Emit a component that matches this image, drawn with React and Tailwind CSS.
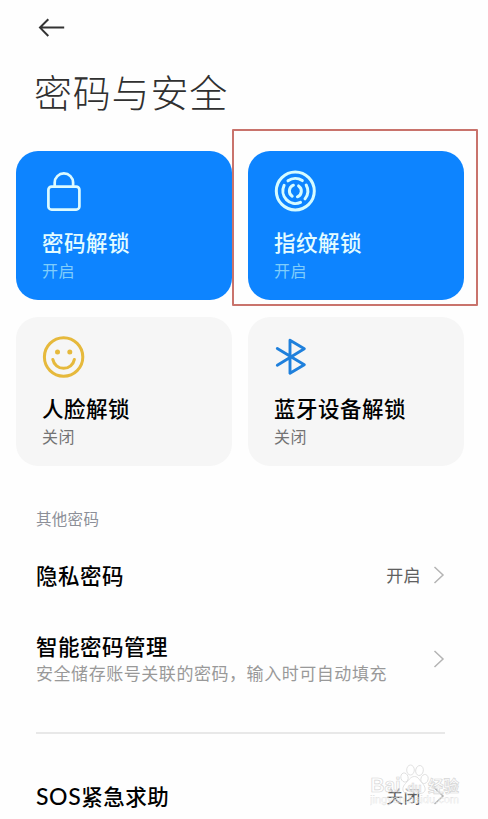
import React from 'react';
import clsx from 'clsx';

const LockIcon = () => (
  <svg className="w-11 h-11" viewBox="0 0 44 44" fill="none" stroke="#dcfaff" strokeWidth="2.7">
    <rect x="6.4" y="17.6" width="31" height="23" rx="3.2" />
    <path d="M12.7 17.3V13.6a9.200 9.200 0 0 1 18.4 0V17.3" />
  </svg>
);

const FingerprintIcon = () => (
  <svg className="w-11 h-11" viewBox="0 0 44 44" fill="none" stroke="#d5fbff" strokeWidth="3" strokeLinecap="round">
    <circle cx="21.3" cy="22" r="19" />
    {/* middle ring, broken in three places */}
    <path d="M14 11.8A12.6 12.6 0 0 1 28.3 11.6" />
    <path d="M32.2 16A12.6 12.6 0 0 1 31 29.9" />
    <path d="M10.1 16.4A12.6 12.6 0 0 0 26.5 33.4" />
    {/* core */}
    <path d="M19.4 16.2A6.2 6.2 0 0 0 18.2 27.2" />
    <path d="M24.6 16.9A6.2 6.2 0 0 1 23.4 27.8" />
  </svg>
);

const FaceIcon = () => (
  <svg className="w-11 h-11" viewBox="0 0 44 44" fill="none" stroke="#e6b93c" strokeWidth="3" strokeLinecap="round">
    <circle cx="21.6" cy="22" r="19.2" />
    <path d="M10.8 24.4a11 11 0 0 0 21.6 0" />
    <circle cx="15.5" cy="17" r="2.5" fill="#e6b93c" stroke="none" />
    <circle cx="27.8" cy="17" r="2.5" fill="#e6b93c" stroke="none" />
  </svg>
);

const BluetoothIcon = () => (
  <svg className="w-11 h-11" viewBox="0 0 44 44" fill="none" stroke="#1f80dc" strokeWidth="2.9" strokeLinecap="round" strokeLinejoin="round">
    <path d="M3.3 13.6L30.3 29.8L16 38.2V5.2L30.3 13.8L3.3 30.2" />
  </svg>
);

const Chevron = () => (
  <svg className="w-3 h-5" viewBox="0 0 12 20" fill="none" stroke="#b4b4b4" strokeWidth="1.5">
    <path d="M1.5 2L10 10L1.5 18" />
  </svg>
);

const cards = [
  { title: '密码解锁', status: '开启', icon: LockIcon, active: true },
  { title: '指纹解锁', status: '开启', icon: FingerprintIcon, active: true, marked: true },
  { title: '人脸解锁', status: '关闭', icon: FaceIcon },
  { title: '蓝牙设备解锁', status: '关闭', icon: BluetoothIcon },
];

const UnlockCard = ({ title, status, icon: Icon, active, marked }) => (
  <div
    className={clsx(
      'relative h-[149px] rounded-[22px] pt-[18px] pl-[26px]',
      active ? 'bg-[#0d84ff]' : 'bg-[#f6f6f6]'
    )}
  >
    <Icon />
    <div
      className={clsx(
        'mt-[15px] text-[21.5px] leading-7 tracking-[0.5px] font-medium',
        active ? 'text-[#e4fcff]' : 'text-black'
      )}
    >
      {title}
    </div>
    <div
      className={clsx(
        'mt-[2px] text-[16px] leading-6 tracking-[0.5px]',
        active ? 'text-[#7fcdfb]' : 'text-[#737373]'
      )}
    >
      {status}
    </div>
    {/* highlight frame */}
    {marked && (
      <div className="absolute -left-4 -top-[22px] w-[246px] h-[177px] border-2 border-solid border-[#c9736c] rounded-[1px]" />
    )}
  </div>
);

const Watermark = () => (
  <div className="absolute left-[370px] top-[763px] w-[92px] h-[46px] select-none pointer-events-none">
    <svg className="w-full h-full" viewBox="0 0 92 46">
      <g fill="#fff" fillOpacity="0.6" stroke="#dadada" strokeWidth="0.8">
        <ellipse cx="34.5" cy="14.5" rx="3.6" ry="4.6" transform="rotate(-15 34.5 14.5)" />
        <ellipse cx="40.5" cy="7" rx="3.8" ry="5" />
        <ellipse cx="49.5" cy="7.5" rx="3.8" ry="5" transform="rotate(10 49.5 7.5)" />
        <ellipse cx="54.5" cy="16" rx="3.6" ry="4.6" transform="rotate(15 54.5 16)" />
        <path d="M44.5 13.5c4 0 5 4 8 7s4 8 0 9.5-5 0-8 0-5 1.5-9 0-3-6.5 0-9.5 5-7 9-7z" />
      </g>
      <g fill="#fff" fillOpacity="0.45" stroke="#d6d6d6" strokeWidth="0.7" fontFamily='"Liberation Sans", sans-serif' fontWeight="700">
        <text x="0.5" y="28.5" fontSize="21" textLength="30" lengthAdjust="spacingAndGlyphs">Bai</text>
        <text x="37.5" y="28.5" fontSize="13" textLength="14" lengthAdjust="spacingAndGlyphs">du</text>
        <text x="58" y="28.5" fontSize="16" textLength="31" lengthAdjust="spacingAndGlyphs" fontFamily='"Noto Sans CJK SC", sans-serif'>经验</text>
        <text x="0" y="40" fontSize="10" strokeWidth="0.25" fontWeight="400" textLength="89" lengthAdjust="spacingAndGlyphs">jingyan.baidu.com</text>
      </g>
    </svg>
  </div>
);

const App = () => {
  return (
    <div className='relative w-[488px] h-[819px] overflow-hidden bg-[#fefefe] font-["Noto_Sans_CJK_SC",sans-serif]'>
      <header className="pt-[17px] pl-[38px]">
        <svg className="w-7 h-[22px]" viewBox="0 0 28 22" fill="none" stroke="#333" strokeWidth="2">
          <path d="M26.2 10.6H2.5M10.3 2.2L2 10.6L10.3 19" />
        </svg>
        <h1 className="mt-[28px] -ml-[4px] h-[49px] text-[38px] leading-[48px] tracking-[0.8px] font-light text-[#303030]">
          密码与安全
        </h1>
      </header>

      <div className="mt-[35px] ml-4 w-[448px] grid grid-cols-2 gap-x-4 gap-y-[17px]">
        {cards.map((card) => (
          <UnlockCard key={card.title} {...card} />
        ))}
      </div>

      <main className="pl-[36px] pr-[43px]">
        <div className="mt-[40px] text-[15.5px] leading-6 tracking-[0.3px] text-[#8c8f98]">其他密码</div>

        <div className="mt-[31px] flex items-center h-[28px]">
          <div className="flex-1 text-[21.5px] leading-7 tracking-[0.5px] font-medium text-black">隐私密码</div>
          <div className="mr-[12px] text-[17px] leading-7 tracking-[0.4px] text-[#606060]">开启</div>
          <Chevron />
        </div>

        <div className="mt-[43px] flex items-center">
          <div className="flex-1">
            <div className="text-[21.5px] leading-7 tracking-[0.5px] font-medium text-black">智能密码管理</div>
            <div className="mt-px text-[17px] leading-6 tracking-[0.55px] text-[#999]">
              安全储存账号关联的密码，输入时可自动填充
            </div>
          </div>
          <Chevron />
        </div>

        <div className="mt-[47px] h-[1.5px] bg-[#e8e8e8]" />

        <div className="mt-[48px] flex items-center h-[28px]">
          <div className="flex-1 text-[21.5px] leading-7 tracking-[0.5px] font-medium text-black">
            <span className="font-[Lato] text-[23px] tracking-[0.6px]">SOS</span>紧急求助
          </div>
          <div className="mr-[12px] text-[17px] leading-7 tracking-[0.4px] text-[#606060]">关闭</div>
          <Chevron />
        </div>
      </main>

      <Watermark />
    </div>
  );
};

export default App;
